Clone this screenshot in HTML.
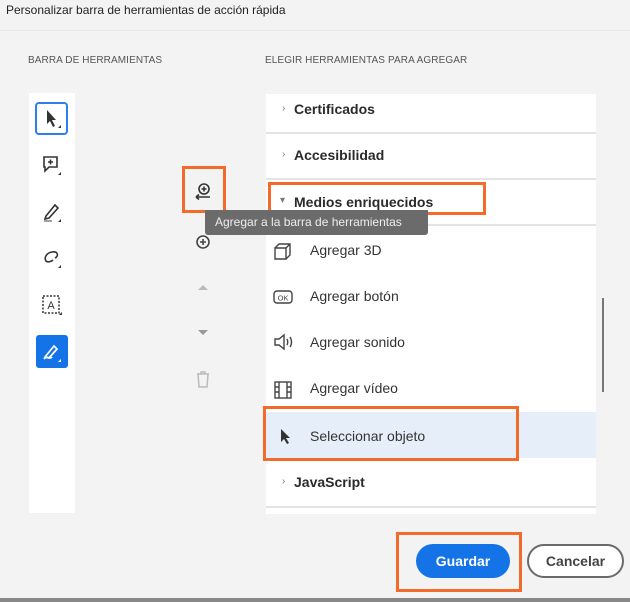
<!DOCTYPE html>
<html><head><meta charset="utf-8"><style>
*{margin:0;padding:0;box-sizing:border-box}
body{width:630px;height:602px;background:#f3f3f3;font-family:"Liberation Sans",sans-serif;position:relative;overflow:hidden;color:#222}
.a{position:absolute}
.title{left:6px;top:3px;font-size:12px;color:#222}
.lbl{font-size:10px;color:#555;letter-spacing:0.1px}
.panel{background:#fff}
.row{position:absolute;left:266px;width:330px;border-bottom:2px solid #e4e4e4;background:#fff}
.hd{font-weight:bold;font-size:14px;color:#2b2b2b}
.it{font-size:14px;color:#333}
.chev{font-size:10px;color:#777}
.ob{position:absolute;border:3px solid #f26b2a;z-index:2}
</style></head><body>
<div class="a title">Personalizar barra de herramientas de acción rápida</div>
<div class="a" style="left:0;top:30px;width:630px;height:1px;background:#e8e8e8"></div>
<div class="a lbl" style="left:28px;top:55px">BARRA DE HERRAMIENTAS</div>
<div class="a lbl" style="left:265px;top:55px">ELEGIR HERRAMIENTAS PARA AGREGAR</div>

<div class="a panel" style="left:29px;top:93px;width:46px;height:420px"></div>
<div class="a" style="left:35px;top:102px;width:33px;height:33px;border:2px solid #2d7ff0;border-radius:4px"></div>
<svg class="a" style="left:40px;top:106px" width="24" height="24" viewBox="0 0 24 24"><path d="M7 4 L7 18 L10 15 L13 21 L15 20 L12 14 L16 14 Z" fill="#333"/><path d="M21 19 L21 22 L18 22Z" fill="#333"/></svg>
<svg class="a" style="left:40px;top:153px" width="24" height="24" viewBox="0 0 24 24" fill="none" stroke="#333" stroke-width="1.6"><path d="M4 4h13v10H9l-4 4v-4H4z"/><path d="M10.5 6.5v5M8 9h5"/><path d="M21 19 L21 22 L18 22Z" fill="#333" stroke="none"/></svg>
<svg class="a" style="left:40px;top:200px" width="24" height="24" viewBox="0 0 24 24" fill="none" stroke="#333" stroke-width="1.6"><path d="M6 16 L15 5 L18 8 L9 18 L5 19Z"/><path d="M4 21h8" stroke="#888"/><path d="M21 19 L21 22 L18 22Z" fill="#333" stroke="none"/></svg>
<svg class="a" style="left:40px;top:246px" width="24" height="24" viewBox="0 0 24 24" fill="none" stroke="#333" stroke-width="1.6"><path d="M15 12 C19 10 18 5 12 6 C6 7 4 12 6 15 C8 17 12 15 13 14"/><path d="M21 19 L21 22 L18 22Z" fill="#333" stroke="none"/></svg>
<svg class="a" style="left:40px;top:293px" width="24" height="24" viewBox="0 0 24 24" fill="none" stroke="#333" stroke-width="1.5"><rect x="3" y="3" width="16" height="17" stroke-dasharray="2 1.5"/><text x="11" y="16" font-size="11" text-anchor="middle" fill="#333" stroke="none" font-family="Liberation Sans">A</text><path d="M22 19 L22 22 L19 22Z" fill="#333" stroke="none"/></svg>
<div class="a" style="left:36px;top:335px;width:32px;height:33px;background:#1473e6;border-radius:3px"></div>
<svg class="a" style="left:40px;top:340px" width="24" height="24" viewBox="0 0 24 24" fill="none" stroke="#fff" stroke-width="1.7"><path d="M5 17 L14 6 L17 9 L9 18 Z"/><path d="M4 19 C7 15 10 20 12 17"/><path d="M21 19 L21 22 L18 22Z" fill="#fff" stroke="none"/></svg>

<div class="ob" style="left:182px;top:166px;width:44px;height:47px"></div>
<svg class="a" style="left:192px;top:180px" width="22" height="22" viewBox="0 0 22 22" fill="none" stroke="#333" stroke-width="1.6"><circle cx="12" cy="9" r="5"/><path d="M12 6.5v5M9.5 9h5"/><path d="M4 17h14M4 17l3-2.5M4 17l3 2.5"/></svg>
<svg class="a" style="left:195px;top:234px" width="16" height="16" viewBox="0 0 16 16" fill="none" stroke="#444" stroke-width="1.6"><circle cx="8" cy="8" r="6"/><path d="M8 5v6M5 8h6"/></svg>
<svg class="a" style="left:196px;top:282px" width="14" height="10"><path d="M2 8 L7 3 L12 8Z" fill="#bbb"/></svg>
<svg class="a" style="left:196px;top:328px" width="14" height="10"><path d="M2 2 L7 7 L12 2Z" fill="#999"/></svg>
<svg class="a" style="left:195px;top:370px" width="16" height="20" viewBox="0 0 16 20" fill="none" stroke="#bbb" stroke-width="1.5"><path d="M2 4h12M6 4V2h4v2M3 4l1 13h8l1-13"/></svg>

<div class="a panel" style="left:266px;top:94px;width:330px;height:420px"></div>
<div class="row" style="top:94px;height:40px"><span class="a chev" style="left:16px;top:9px">›</span><span class="a hd" style="left:28px;top:7px">Certificados</span></div>
<div class="row" style="top:134px;height:46px"><span class="a chev" style="left:16px;top:15px">›</span><span class="a hd" style="left:28px;top:13px">Accesibilidad</span></div>
<div class="row" style="top:180px;height:46px"><span class="a chev" style="left:14px;top:15px">▾</span><span class="a hd" style="left:28px;top:14px">Medios enriquecidos</span></div>
<svg class="a" style="left:272px;top:240px" width="22" height="22" viewBox="0 0 22 22" fill="none" stroke="#444" stroke-width="1.4"><path d="M3 8h11v11H3z"/><path d="M3 8l4-4h11v11l-4 4M14 8l4-4"/></svg>
<span class="a it" style="left:310px;top:242px">Agregar 3D</span>
<svg class="a" style="left:272px;top:288px" width="22" height="18" viewBox="0 0 22 18"><rect x="2" y="3" width="18" height="12" rx="3" fill="none" stroke="#444" stroke-width="1.4"/><text x="11" y="12.5" font-size="7.5" text-anchor="middle" fill="#444" font-family="Liberation Sans">OK</text></svg>
<span class="a it" style="left:310px;top:288px">Agregar botón</span>
<svg class="a" style="left:272px;top:333px" width="22" height="18" viewBox="0 0 22 18" fill="none" stroke="#444" stroke-width="1.4"><path d="M3 6h4l5-4v14l-5-4H3z"/><path d="M15 6c1 2 1 4 0 6M18 4c2 3 2 7 0 10"/></svg>
<span class="a it" style="left:310px;top:334px">Agregar sonido</span>
<svg class="a" style="left:273px;top:380px" width="20" height="20" viewBox="0 0 20 20" fill="none" stroke="#444" stroke-width="1.4"><rect x="2" y="2" width="16" height="16"/><path d="M6 2v16M14 2v16M2 7h4M2 12h4M14 7h4M14 12h4"/></svg>
<span class="a it" style="left:310px;top:380px">Agregar vídeo</span>
<div class="a" style="left:266px;top:412px;width:330px;height:46px;background:#e6eff9"></div>
<svg class="a" style="left:278px;top:427px" width="14" height="18" viewBox="0 0 14 18"><path d="M3 2 L3 15 L6 12 L9 17 L11 16 L8 11 L12 11Z" fill="#333"/></svg>
<span class="a it" style="left:310px;top:428px">Seleccionar objeto</span>
<div class="row" style="top:460px;height:48px"><span class="a chev" style="left:16px;top:16px">›</span><span class="a hd" style="left:28px;top:14px">JavaScript</span></div>
<div class="a" style="left:602px;top:298px;width:2px;height:94px;background:#777"></div>

<div class="ob" style="left:268px;top:182px;width:218px;height:33px"></div>
<div class="ob" style="left:263px;top:406px;width:256px;height:55px"></div>
<div class="a" style="left:205px;top:210px;width:223px;height:25px;background:#6b6b6b;color:#eee;font-size:12px;line-height:25px;padding-left:10px;border-radius:0 0 3px 3px;z-index:3">Agregar a la barra de herramientas</div>

<div class="ob" style="left:396px;top:532px;width:126px;height:60px"></div>
<div class="a" style="left:416px;top:544px;width:94px;height:34px;background:#1473e6;border-radius:17px;color:#fff;font-weight:bold;font-size:14px;text-align:center;line-height:34px">Guardar</div>
<div class="a" style="left:527px;top:544px;width:97px;height:34px;border:2px solid #6a6a6a;border-radius:17px;color:#444;font-weight:bold;font-size:14px;text-align:center;line-height:30px;background:#fff">Cancelar</div>
<div class="a" style="left:0;top:598px;width:630px;height:4px;background:#888"></div>
</body></html>
